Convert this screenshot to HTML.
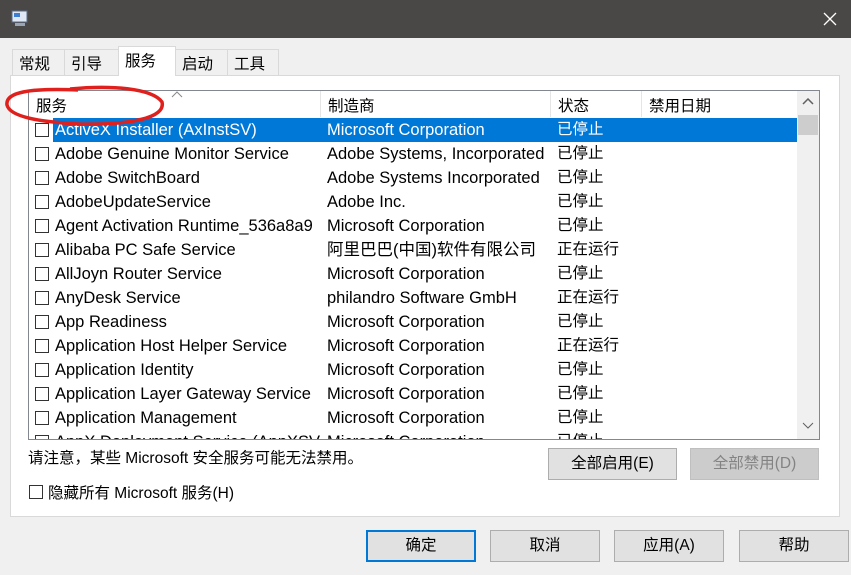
<!DOCTYPE html>
<html><head><meta charset="utf-8"><style>
*{box-sizing:border-box;margin:0;padding:0}
body{width:851px;height:575px;background:#f0f0f0;font-family:"Liberation Sans","Noto Sans CJK SC",sans-serif;font-size:15.5px;color:#000;position:relative;overflow:hidden}
.abs{position:absolute}
.title{left:0;top:0;width:851px;height:38px;background:#4a4846}
.tab{top:49px;height:26px;border:1px solid #d9d9d9;border-bottom:none;background:#f0f0f0;padding:2px 0 0 6px;font-size:15.5px}
.panel{left:10px;top:75px;width:830px;height:442px;background:#fff;border:1px solid #d9d9d9}
.list{left:28px;top:90px;width:792px;height:350px;border:1px solid #828790;background:#fff;overflow:hidden}
.hdr{top:0;height:26px;border-right:1px solid #e5e5e5;padding:3px 0 0 7px;font-size:15.5px}
.row{left:0;width:768px;height:24px;white-space:nowrap;font-size:16.5px}
.row span{position:absolute;top:0;line-height:24px;overflow:hidden}
.row span.a{width:266px}.row span.b{width:226px}.row span.c{font-size:15.5px}
.cb{position:absolute;left:6px;top:5px;width:14px;height:14px;border:1px solid #333;background:#fff}
.sel{background:#0078d7;color:#fff}
.btn{height:32px;border:1px solid #adadad;background:#e1e1e1;text-align:center;line-height:30px;font-size:15.5px}
</style></head><body>
<div class="abs title">
<svg class="abs" style="left:11px;top:10px" width="18" height="18"><rect x="1" y="1" width="15" height="11" fill="#dfe8f4" stroke="#5a6c88"/><rect x="3" y="3" width="6" height="4" fill="#3c7fd0"/><rect x="4" y="13" width="10" height="3" fill="#9aa5b4"/></svg>
<svg class="abs" style="left:823px;top:12px" width="14" height="14"><path d="M1 1L13 13M13 1L1 13" stroke="#fff" stroke-width="1.3"/></svg>
</div>
<div class="abs panel"></div>
<div class="abs tab" style="left:12px;width:53px">常规</div>
<div class="abs tab" style="left:64px;width:55px">引导</div>
<div class="abs tab" style="left:227px;width:52px">工具</div>
<div class="abs tab" style="left:175px;width:53px">启动</div>
<div class="abs tab" style="left:118px;top:46px;height:30px;width:58px;background:#fff">服务</div>
<div class="abs list">
<div class="abs hdr" style="left:0;width:292px">服务</div>
<div class="abs hdr" style="left:292px;width:230px">制造商</div>
<div class="abs hdr" style="left:522px;width:91px">状态</div>
<div class="abs hdr" style="left:613px;width:155px;border-right:none">禁用日期</div>
<svg class="abs" style="left:142px;top:0" width="12" height="7"><path d="M1 6L6 1L11 6" stroke="#888" fill="none"/></svg>
<div class="abs" style="left:768px;top:0;width:22px;height:348px;background:#f0f0f0"></div>
<div class="abs" style="left:769px;top:24px;width:20px;height:20px;background:#cdcdcd"></div>
<svg class="abs" style="left:773px;top:7px" width="12" height="8"><path d="M1 6L6 1L11 6" stroke="#606060" stroke-width="1.5" fill="none"/></svg>
<svg class="abs" style="left:773px;top:331px" width="12" height="8"><path d="M1 1L6 6L11 1" stroke="#606060" stroke-width="1" fill="none"/></svg>
<div id="rows"></div>
</div>
<div class="abs" style="left:28px;top:446px">请注意，某些 Microsoft 安全服务可能无法禁用。</div>
<div class="abs btn" style="left:548px;top:448px;width:129px">全部启用(E)</div>
<div class="abs btn" style="left:690px;top:448px;width:129px;background:#ccc;border-color:#bfbfbf;color:#838383">全部禁用(D)</div>
<div class="abs" style="left:29px;top:485px;width:14px;height:14px;border:1px solid #333;background:#fff"></div>
<div class="abs" style="left:48px;top:481px">隐藏所有 Microsoft 服务(H)</div>
<div class="abs btn" style="left:366px;top:530px;width:110px;border:2px solid #0078d7;line-height:28px">确定</div>
<div class="abs btn" style="left:490px;top:530px;width:110px">取消</div>
<div class="abs btn" style="left:614px;top:530px;width:110px">应用(A)</div>
<div class="abs btn" style="left:739px;top:530px;width:110px">帮助</div>
<svg class="abs" style="left:0;top:80px" width="175" height="50"><path d="M70 9C110 5 152 8 162 22C166 38 130 45 80 44C40 42 10 37 7 25C5 12 30 8 78 10" stroke="#e0201c" stroke-width="3.5" fill="none"/></svg>
<script>
var d=[["ActiveX Installer (AxInstSV)","Microsoft Corporation","已停止"],["Adobe Genuine Monitor Service","Adobe Systems, Incorporated","已停止"],["Adobe SwitchBoard","Adobe Systems Incorporated","已停止"],["AdobeUpdateService","Adobe Inc.","已停止"],["Agent Activation Runtime_536a8a9","Microsoft Corporation","已停止"],["Alibaba PC Safe Service","阿里巴巴(中国)软件有限公司","正在运行"],["AllJoyn Router Service","Microsoft Corporation","已停止"],["AnyDesk Service","philandro Software GmbH","正在运行"],["App Readiness","Microsoft Corporation","已停止"],["Application Host Helper Service","Microsoft Corporation","正在运行"],["Application Identity","Microsoft Corporation","已停止"],["Application Layer Gateway Service","Microsoft Corporation","已停止"],["Application Management","Microsoft Corporation","已停止"],["AppX Deployment Service (AppXSVC)","Microsoft Corporation","已停止"]];
var h="";d.forEach(function(r,i){h+='<div class="abs row'+(i==0?' sel':'')+'" style="top:'+(27+i*24)+'px"><div class="cb"></div><span class="a" style="left:26px">'+r[0]+'</span><span class="b" style="left:298px">'+r[1]+'</span><span class="c" style="left:528px">'+r[2]+'</span></div>';});
document.getElementById("rows").innerHTML=h;
document.querySelector(".row.sel").style.left="24px";document.querySelector(".row.sel").style.width="744px";
var s=document.querySelectorAll(".row.sel span");s[0].style.left="2px";s[1].style.left="274px";s[2].style.left="504px";
var c=document.querySelector(".row.sel .cb");c.style.left="-18px";
</script>
</body></html>
